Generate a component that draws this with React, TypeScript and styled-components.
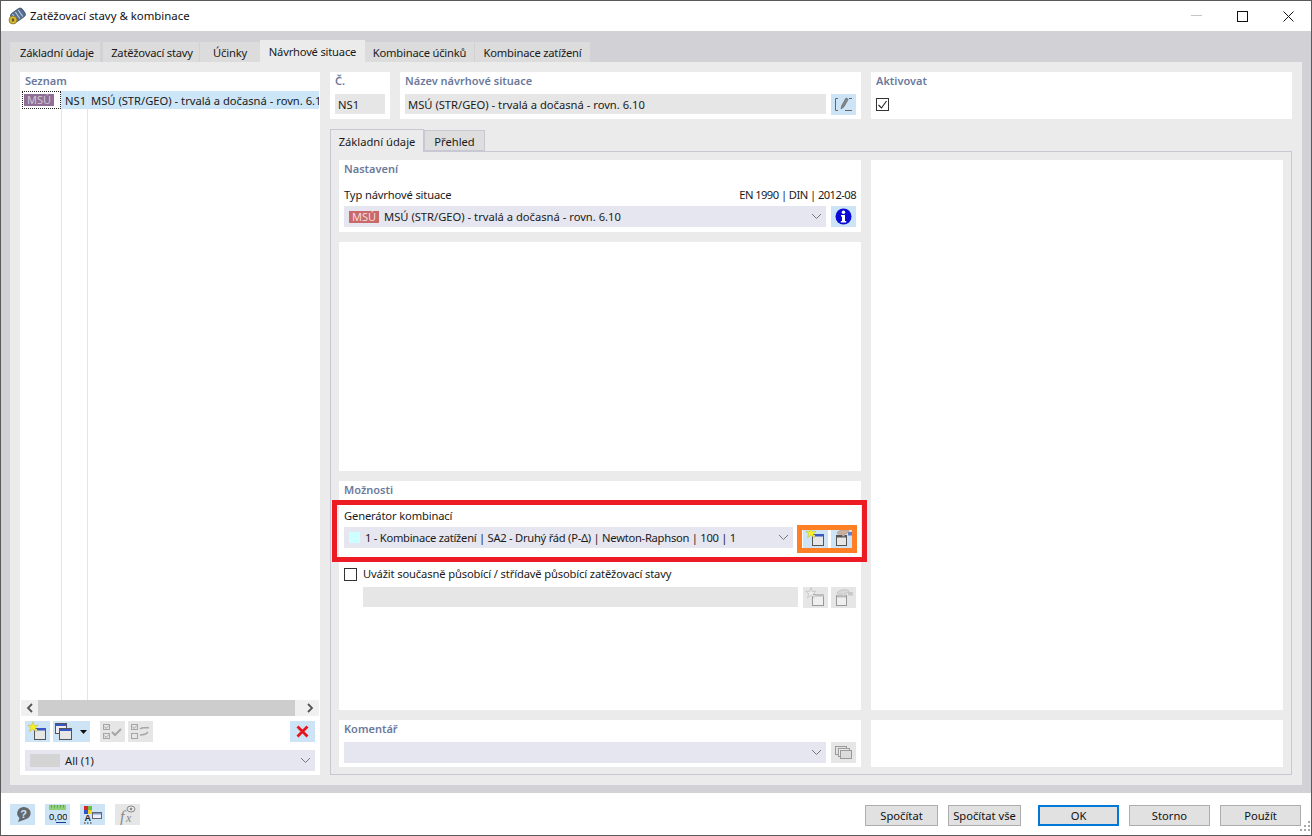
import React from "react";
import styled, { createGlobalStyle } from "styled-components";

const Global = createGlobalStyle`
  html, body { margin: 0; padding: 0; background: #fff; }
  body { font-family: "Noto Sans", "Open Sans", "Liberation Sans", sans-serif; font-size: 11.2px; color: #1a1a1a; }
  * { box-sizing: border-box; }
`;

const Window = styled.div`
  width: 1312px; height: 836px; display: flex; flex-direction: column; background: #fff;
  border: 1px solid #5a5a5a; overflow: hidden;
`;
const TitleBar = styled.div`
  height: 30px; flex: none; display: flex; align-items: center; padding-left: 7px; background: #fff;
`;
const Title = styled.span` margin-left: 4px; padding-bottom: 2px; font-size: 11.4px; flex: 1; color: #111; `;
const WinBtn = styled.div`
  width: 46px; height: 30px; display: flex; align-items: center; justify-content: center;
`;
const Band = styled.div`
  flex: 1; min-height: 0; background: #d1d1d6; padding: 9px 9px 8px 9px; display: flex; flex-direction: column;
`;
const Tabs = styled.div` height: 22px; display: flex; align-items: flex-end; flex: none; `;
const Tab = styled.div<{ $w: number; $active?: boolean; $gap?: number; $shift?: number }>`
  width: ${p => p.$w}px; margin-right: ${p => p.$gap ?? 0}px; padding-left: ${p => p.$shift ?? 0}px;
  height: ${p => (p.$active ? 22 : 20)}px; display: flex; align-items: center; justify-content: center;
  background: ${p => (p.$active ? "#ebebeb" : "#dcdcdc")}; white-space: nowrap; color: #1a1a1a; letter-spacing: -0.2px;
`;
const Content = styled.div`
  flex: 1; min-height: 0; background: #ebebeb; padding: 10px; display: grid; grid-template-columns: 300px 962px; column-gap: 10px;
`;
const Panel = styled.div`
  background: #fff; padding: 0 5px; display: flex; flex-direction: column; min-width: 0; position: relative;
`;
const Heading = styled.div`
  height: 18px; line-height: 18px; flex: none; font-weight: 600; color: #6b7a9c; font-size: 11px;
`;
const ListPanel = styled(Panel)` padding: 0; `;
const ListHeading = styled(Heading)` padding-left: 5px; height: 19px; `;
const Tree = styled.div` flex: 1; min-height: 0; display: flex; padding-left: 1px; padding-right: 1px; overflow: hidden; `;
const TreeCol = styled.div<{ $w?: number }>`
  ${p => (p.$w ? `width:${p.$w}px; flex:none; border-right: 1px solid #e4e4e4;` : "flex:1; min-width:0;")}
`;
const TreeCell = styled.div<{ $selected?: boolean }>`
  height: 18px; display: flex; align-items: center; padding-left: 3px; white-space: nowrap; overflow: hidden;
  background: ${p => (p.$selected ? "#cde6f7" : "transparent")};
`;
const FocusCell = styled(TreeCell)`
  outline: 1px dotted #222; outline-offset: -1px; padding-left: 2px; margin-left: 1px;
`;
const Badge = styled.span<{ $bg: string; $fg: string }>`
  display: inline-flex; align-items: center; justify-content: center; width: 30px; height: 12px; flex: none;
  background: ${p => p.$bg}; color: ${p => p.$fg}; font-size: 11px; line-height: 12px;
`;
const ScrollBar = styled.div`
  height: 16px; flex: none; margin: 0 1px; background: #f0f0f0; display: flex; align-items: stretch;
`;
const ScrollArrow = styled.div` width: 17px; flex: none; display: flex; align-items: center; justify-content: center; `;
const ScrollThumb = styled.div` width: 257px; background: #cdcdcd; `;
const ScrollRest = styled.div` flex: 1; `;
const ListBar = styled.div`
  height: 21px; flex: none; margin: 5px 5px 0; display: flex; gap: 3px;
`;
const IconBtn = styled.div<{ $w?: number; $off?: boolean }>`
  width: ${p => p.$w ?? 25}px; height: 21px; flex: none; display: flex; align-items: center; justify-content: center;
  background: ${p => (p.$off ? "#e6e6e6" : "#cde4f7")};
`;
const Spacer = styled.div<{ $w?: number }>` ${p => (p.$w ? `width:${p.$w}px;flex:none;` : "flex:1;")} `;
const Combo = styled.div<{ $w?: number }>`
  height: 21px; display: flex; align-items: center; background: #e6e6f0; padding-left: 5px; gap: 5px; white-space: nowrap;
  ${p => (p.$w ? `width:${p.$w}px;flex:none;` : "flex:1;min-width:0;")}
`;
const ComboText = styled.span<{ $tight?: boolean }>` flex: 1; min-width: 0; ${p => (p.$tight ? "letter-spacing:-0.27px;" : "")} `;
const ChevronBox = styled.span` width: 20px; flex: none; display: flex; justify-content: center; `;
const Swatch = styled.span<{ $w: number; $h: number; $c: string }>`
  width: ${p => p.$w}px; height: ${p => p.$h}px; flex: none; background: ${p => p.$c};
`;
const ListCombo = styled(Combo)` margin: 8px 5px 4px; flex: none; `;
const Right = styled.div` display: flex; flex-direction: column; min-height: 0; `;
const TopRow = styled.div` display: grid; grid-template-columns: 60px 461px 421px; column-gap: 10px; height: 47px; flex: none; `;
const Field = styled.div<{ $off?: boolean }>`
  height: 20px; background: #e6e6e6; padding-left: ${p => (p.$off ? 0 : 3)}px; display: flex; align-items: center; flex: 1; min-width: 0; white-space: nowrap;
`;
const FieldRow = styled.div` display: flex; gap: 5px; margin-top: 4px; `;
const SubTabs = styled.div` height: 22px; margin-top: 10px; display: flex; flex: none; align-items: flex-end; position: relative; z-index: 1; `;
const SubTab = styled.div<{ $w: number; $active?: boolean }>`
  width: ${p => p.$w}px; height: ${p => (p.$active ? 23 : 21)}px; display: flex; align-items: center; justify-content: center; padding-top: 1px;
  background: ${p => (p.$active ? "#ebebeb" : "#dedede")}; border: 1px solid #c8c8d4;
  border-bottom: ${p => (p.$active ? "none" : "1px solid #c8c8d4")}; margin-bottom: ${p => (p.$active ? -1 : 0)}px;
`;
const Frame = styled.div`
  flex: 1; min-height: 0; border: 1px solid #c8c8d4; padding: 8px; display: grid;
  grid-template-columns: 522px 412px; grid-template-rows: 550px 47px; gap: 10px;
`;
const Stack = styled.div` display: grid; grid-template-rows: 72px 229px 229px; row-gap: 10px; min-height: 0; `;
const LabelRow = styled.div`
  height: 18px; margin-top: 8px; margin-bottom: 2px; padding-bottom: 2px; display: flex; align-items: center; justify-content: space-between; flex: none; white-space: nowrap; letter-spacing: -0.15px;
`;
const Norm = styled.span` letter-spacing: -0.56px; `;
const WideRow = styled.div<{ $top?: number }>` display: flex; flex: none; height: 21px; margin-top: ${p => p.$top ?? 0}px; `;
const Checkbox = styled.div`
  width: 13px; height: 13px; flex: none; border: 1px solid #333; background: #fff; display: flex; align-items: center; justify-content: center;
`;
const CheckRow = styled.div` height: 18px; margin-top: 17px; display: flex; align-items: center; gap: 6px; flex: none; white-space: nowrap; letter-spacing: -0.14px; `;
const CheckText = styled.span` padding-bottom: 2px; `;
const DisabledRow = styled.div` height: 21px; margin-top: 4px; margin-left: 19px; display: flex; flex: none; `;
const GenArea = styled.div` position: relative; flex: none; `;
const RedFrame = styled.div`
  position: absolute; left: -12px; right: -11px; top: 1px; bottom: -14px; border: 5px solid #ed1c24; pointer-events: none;
`;
const BtnGroup = styled.div` position: relative; display: flex; gap: 3px; flex: none; `;
const OrangeFrame = styled.div`
  position: absolute; left: -6px; right: -1px; top: -2px; bottom: -5px; border: 5px solid #ff7f27; pointer-events: none;
`;
const CheckBoxAlign = styled.div` padding-top: 8px; `;
const Footer = styled.div`
  height: 42px; flex: none; display: flex; align-items: center; padding: 0 10px 0 9px; position: relative;
`;
const FooterIcons = styled.div` display: flex; gap: 10px; `;
const DlgBtn = styled.div<{ $w: number; $default?: boolean; $gap: number }>`
  width: ${p => p.$w}px; height: 21px; margin-left: ${p => p.$gap}px; margin-top: 2px; background: #e1e1e1; display: flex; align-items: center; justify-content: center;
  border: ${p => (p.$default ? "2px solid #0078d7" : "1px solid #adadad")}; color: #111;
`;
const Grip = styled.div` position: absolute; right: 1px; bottom: 1px; `;
const CopyBtn = styled(IconBtn)` justify-content: flex-start; padding-left: 2px; `;

const Chevron = () => (
  <svg width="11" height="7" viewBox="0 0 11 7"><path d="M1 1l4.500 4.500L10 1" fill="none" stroke="#777" strokeWidth="1" /></svg>
);
const NewIcon = ({ off }: { off?: boolean }) => (
  <svg width="25" height="21" viewBox="0 0 25 21">
    <rect x="9.500" y="7.500" width="11" height="11" fill={off ? "#efefef" : "#e6e6e6"} stroke={off ? "#999" : "#555"} />
    <rect x="12" y="7" width="9" height="2.500" fill={off ? "#bdbdbd" : "#3a55c4"} />
    <path d="M8 .5l1.200 3.900 4-.2-2.900 2.500 1.200 4L8 8.300l-3.500 2.400 1.200-4-2.900-2.500 4 .2z" fill={off ? "#ededed" : "#f8f020"} stroke={off ? "#aaa" : "#bdb64a"} strokeWidth=".5" />
  </svg>
);
const HandIcon = ({ off }: { off?: boolean }) => (
  <svg width="25" height="21" viewBox="0 0 25 21">
    <rect x="5.500" y="8.500" width="10" height="10" fill={off ? "#efefef" : "#e6e6e6"} stroke={off ? "#999" : "#555"} />
    <rect x="6" y="8" width="9" height="2.500" fill={off ? "#bdbdbd" : "#555"} />
    <path d="M17 5h5v3.500h-5z" fill={off ? "#c9c9c9" : "#5b82c8"} />
    <path d="M6 6c1-2 3-2.500 5-3s4-.5 6 .2c1.200.5 1 2-.2 2.500l-2.800 1.200-.8 2.600-2-.5-.5-2-3.500.3z" fill={off ? "#d8d8d8" : "#cdb19e"} stroke={off ? "#aaa" : "#9a8272"} strokeWidth=".5" />
  </svg>
);
const CopyIcon = () => (
  <svg width="17" height="17" viewBox="0 0 17 17">
    <rect x=".5" y=".5" width="11" height="10" fill="#eee" stroke="#555" />
    <rect x="1" y="1" width="10" height="2" fill="#3a55c4" />
    <rect x="4.500" y="5.500" width="12" height="11" fill="#e6e6e6" stroke="#555" />
    <rect x="5" y="6" width="11" height="2" fill="#3a55c4" />
  </svg>
);
const CheckAllIcon = () => (
  <svg width="21" height="17" viewBox="0 0 21 17" fill="none" stroke="#a6a6a6">
    <rect x="1.500" y="1.500" width="6" height="5" /><rect x="1.500" y="10.500" width="6" height="5" />
    <path d="M2.500 3.500l1.500 2 3-3M2.500 12.500l1.500 2 3-3" /><path d="M10 9l3 3 6-6" strokeWidth="2" />
  </svg>
);
const SwapIcon = () => (
  <svg width="21" height="17" viewBox="0 0 21 17" fill="none" stroke="#a6a6a6">
    <rect x="1.500" y="1.500" width="6" height="5" /><rect x="1.500" y="10.500" width="6" height="5" />
    <path d="M2.500 3.500l1.500 2 3-3" /><path d="M10 6c3-2.500 5-.5 9-1.500M10 12c3 0 6-.5 8-3" strokeWidth="1.500" />
  </svg>
);
const XIcon = () => (
  <svg width="13" height="13" viewBox="0 0 13 13"><path d="M1.500 1.500l10 10M11.500 1.500l-10 10" stroke="#e8141c" strokeWidth="2.800" /></svg>
);
const EditIcon = () => (
  <svg width="19" height="15" viewBox="0 0 19 15" fill="none">
    <path d="M4 1.500H1.500v12H4M11 13.500h7M15 1.500h3" stroke="#666" />
    <path d="M7 12l.8-3.500 4.200-7.500 2.200 1.200-4.200 7.500z" fill="#888" stroke="#555" strokeWidth=".6" />
  </svg>
);
const InfoIcon = () => (
  <svg width="17" height="17" viewBox="0 0 17 17">
    <circle cx="8.500" cy="8.500" r="8" fill="#0a0ad8" />
    <circle cx="8.500" cy="4.200" r="1.700" fill="#fff" />
    <path d="M6 7h4v6h1.200v1.400H5.800V13H7V8.400H6z" fill="#fff" />
  </svg>
);
const CommentIcon = () => (
  <svg width="19" height="15" viewBox="0 0 19 15" fill="none" stroke="#9a9a9a">
    <rect x="1.500" y="1.500" width="11" height="8" fill="#e2e2e2" /><rect x="4.500" y="3.500" width="11" height="8" fill="#ececec" /><rect x="6.500" y="5.500" width="11" height="8" fill="#dcdcdc" />
  </svg>
);
const HelpIcon = () => (
  <svg width="19" height="19" viewBox="0 0 19 19">
    <path d="M10.500 2a6.800 6.300 0 0 1 1.500 12.500L5 17l1.500-4A6.800 6.300 0 0 1 10.500 2z" fill="#62686c" />
    <text x="10.500" y="12.500" textAnchor="middle" fontSize="11" fontWeight="700" fill="#cde4f7" fontFamily="Liberation Sans, sans-serif">?</text>
  </svg>
);
const UnitsIcon = () => (
  <svg width="19" height="19" viewBox="0 0 19 19">
    <rect x="1" y="0" width="17" height="5" fill="#8fcf78" />
    <path d="M3.500 0v2.500M6.500 0v2.500M9.500 0v2.500M12.500 0v2.500M15.500 0v2.500" stroke="#5f9f4d" />
    <text x="1" y="15" fontSize="9.500" fill="#111" fontFamily="Liberation Sans, sans-serif">0,00</text>
    <path d="M8 17.500h10" stroke="#1a3a9a" />
  </svg>
);
const ColorsIcon = () => (
  <svg width="25" height="21" viewBox="0 0 25 21">
    <rect x="4" y="2" width="4" height="4" fill="#d8262c" /><rect x="8" y="2" width="4" height="4" fill="#6fbf3a" />
    <rect x="4" y="6" width="4" height="4" fill="#2f55c8" /><rect x="8" y="6" width="4" height="4" fill="#f2d32a" />
    <text x="4.500" y="17" fontSize="9" fontWeight="700" fill="#222" fontFamily="Liberation Sans, sans-serif">A</text>
    <path d="M4 19h1.500M7 19h1.500M10 19h1.500" stroke="#222" />
    <rect x="12.500" y="8.500" width="9" height="6" fill="#eef" stroke="#666" /><rect x="13" y="9" width="8" height="1.500" fill="#7f9fd0" />
  </svg>
);
const FxIcon = () => (
  <svg width="25" height="21" viewBox="0 0 25 21">
    <text x="5" y="18" fontSize="16" fontStyle="italic" fill="#8c8c8c" fontFamily="Liberation Serif, serif">f</text>
    <text x="11" y="18" fontSize="12" fontStyle="italic" fill="#8c8c8c" fontFamily="Liberation Serif, serif">x</text>
    <ellipse cx="16" cy="5" rx="4" ry="3" fill="none" stroke="#8c8c8c" /><circle cx="16" cy="5" r="1.300" fill="#8c8c8c" />
  </svg>
);
const AppIcon = () => (
  <svg width="18" height="18" viewBox="0 0 18 18">
    <g transform="rotate(-35 10 8)">
      <rect x="3" y="3" width="14" height="10" rx="3" fill="#566f92" stroke="#2f3f55" strokeWidth=".6" />
      <path d="M6 4v8M9.500 4v8M13 4v8" stroke="#c9d5e2" strokeWidth="1" />
    </g>
    <circle cx="5" cy="13" r="4" fill="#d6b93a" stroke="#6b5b18" strokeWidth=".6" />
    <rect x="3.800" y="11.500" width="2.400" height="3" fill="#6b5b18" />
  </svg>
);

export default function App() {
  return (
    <Window>
      <Global />
      <TitleBar>
        <AppIcon />
        <Title>Zatěžovací stavy &amp; kombinace</Title>
        <WinBtn><svg width="11" height="2"><rect width="11" height="1" fill="#c4c4c4" /></svg></WinBtn>
        <WinBtn><svg width="11" height="11"><rect x=".5" y=".5" width="10" height="10" fill="none" stroke="#111" /></svg></WinBtn>
        <WinBtn><svg width="11" height="11"><path d="M.5.500l10 10M10.500.500l-10 10" stroke="#111" /></svg></WinBtn>
      </TitleBar>
      <Band>
        <Tabs>
          <Tab $w={90} $gap={3} $shift={4}>Základní údaje</Tab>
          <Tab $w={96} $gap={1} $shift={2}>Zatěžovací stavy</Tab>
          <Tab $w={60}>Účinky</Tab>
          <Tab $w={105} $active>Návrhové situace</Tab>
          <Tab $w={109} $gap={1}>Kombinace účinků</Tab>
          <Tab $w={115}>Kombinace zatížení</Tab>
        </Tabs>
        <Content>
          <ListPanel>
            <ListHeading>Seznam</ListHeading>
            <Tree>
              <TreeCol $w={41}>
                <FocusCell><Badge $bg="#8f6f96" $fg="#cfc6d6">MSÚ</Badge></FocusCell>
              </TreeCol>
              <TreeCol $w={26}><TreeCell $selected>NS1</TreeCell></TreeCol>
              <TreeCol><TreeCell $selected>MSÚ (STR/GEO) - trvalá a dočasná - rovn. 6.10</TreeCell></TreeCol>
            </Tree>
            <ScrollBar>
              <ScrollArrow><svg width="7" height="10"><path d="M6 1L2 5l4 4" fill="none" stroke="#555" strokeWidth="1.800" /></svg></ScrollArrow>
              <ScrollThumb />
              <ScrollRest />
              <ScrollArrow><svg width="7" height="10"><path d="M1 1l4 4-4 4" fill="none" stroke="#555" strokeWidth="1.800" /></svg></ScrollArrow>
            </ScrollBar>
            <ListBar>
              <IconBtn><NewIcon /></IconBtn>
              <CopyBtn $w={37}>
                <CopyIcon />
                <Spacer $w={8} />
                <svg width="7" height="4"><path d="M0 0h7L3.500 4z" fill="#111" /></svg>
              </CopyBtn>
              <Spacer $w={4} />
              <IconBtn $off><CheckAllIcon /></IconBtn>
              <IconBtn $off><SwapIcon /></IconBtn>
              <Spacer />
              <IconBtn><XIcon /></IconBtn>
            </ListBar>
            <ListCombo>
              <Swatch $w={30} $h={13} $c="#d4d4d4" />
              <ComboText>All (1)</ComboText>
              <ChevronBox><Chevron /></ChevronBox>
            </ListCombo>
          </ListPanel>
          <Right>
            <TopRow>
              <Panel>
                <Heading>Č.</Heading>
                <FieldRow><Field>NS1</Field></FieldRow>
              </Panel>
              <Panel>
                <Heading>Název návrhové situace</Heading>
                <FieldRow>
                  <Field>MSÚ (STR/GEO) - trvalá a dočasná - rovn. 6.10</Field>
                  <IconBtn $w={25}><EditIcon /></IconBtn>
                </FieldRow>
              </Panel>
              <Panel>
                <Heading>Aktivovat</Heading>
                <CheckBoxAlign>
                  <Checkbox><svg width="11" height="10"><path d="M1.500 5l3 3 5-7" fill="none" stroke="#222" strokeWidth="1.100" /></svg></Checkbox>
                </CheckBoxAlign>
              </Panel>
            </TopRow>
            <SubTabs>
              <SubTab $w={94} $active>Základní údaje</SubTab>
              <SubTab $w={61}>Přehled</SubTab>
            </SubTabs>
            <Frame>
              <Stack>
                <Panel>
                  <Heading>Nastavení</Heading>
                  <LabelRow><span>Typ návrhové situace</span><Norm>EN 1990 | DIN | 2012-08</Norm></LabelRow>
                  <WideRow>
                    <Combo>
                      <Badge $bg="#c9696a" $fg="#f6dcdc">MSÚ</Badge>
                      <ComboText>MSÚ (STR/GEO) - trvalá a dočasná - rovn. 6.10</ComboText>
                      <ChevronBox><Chevron /></ChevronBox>
                    </Combo>
                    <Spacer $w={5} />
                    <IconBtn><InfoIcon /></IconBtn>
                  </WideRow>
                </Panel>
                <Panel />
                <Panel>
                  <Heading>Možnosti</Heading>
                  <GenArea>
                    <LabelRow>Generátor kombinací</LabelRow>
                    <WideRow>
                      <Combo $w={449}>
                        <Swatch $w={11} $h={11} $c="#ccffff" />
                        <ComboText $tight>1 - Kombinace zatížení | SA2 - Druhý řád (P-Δ) | Newton-Raphson | 100 | 1</ComboText>
                        <ChevronBox><Chevron /></ChevronBox>
                      </Combo>
                      <Spacer $w={10} />
                      <BtnGroup>
                        <IconBtn><NewIcon /></IconBtn>
                        <IconBtn><HandIcon /></IconBtn>
                        <OrangeFrame />
                      </BtnGroup>
                    </WideRow>
                    <RedFrame />
                  </GenArea>
                  <CheckRow><Checkbox /><CheckText>Uvážit současně působící / střídavě působící zatěžovací stavy</CheckText></CheckRow>
                  <DisabledRow>
                    <Field $off />
                    <Spacer $w={5} />
                    <BtnGroup>
                      <IconBtn $off><NewIcon off /></IconBtn>
                      <IconBtn $off><HandIcon off /></IconBtn>
                    </BtnGroup>
                  </DisabledRow>
                </Panel>
              </Stack>
              <Panel />
              <Panel>
                <Heading>Komentář</Heading>
                <WideRow $top={4}>
                  <Combo><ComboText /><ChevronBox><Chevron /></ChevronBox></Combo>
                  <Spacer $w={5} />
                  <IconBtn $off><CommentIcon /></IconBtn>
                </WideRow>
              </Panel>
              <Panel />
            </Frame>
          </Right>
        </Content>
      </Band>
      <Footer>
        <FooterIcons>
          <IconBtn><HelpIcon /></IconBtn>
          <IconBtn><UnitsIcon /></IconBtn>
          <IconBtn><ColorsIcon /></IconBtn>
          <IconBtn $off><FxIcon /></IconBtn>
        </FooterIcons>
        <Spacer />
        <DlgBtn $w={73} $gap={0}>Spočítat</DlgBtn>
        <DlgBtn $w={73} $gap={10}>Spočítat vše</DlgBtn>
        <DlgBtn $w={81} $gap={17} $default>OK</DlgBtn>
        <DlgBtn $w={81} $gap={10}>Storno</DlgBtn>
        <DlgBtn $w={81} $gap={10}>Použít</DlgBtn>
        <Grip><svg width="10" height="10" fill="#a8a8a8"><rect x="8" y="0" width="2" height="2" /><rect x="4" y="4" width="2" height="2" /><rect x="8" y="4" width="2" height="2" /><rect x="0" y="8" width="2" height="2" /><rect x="4" y="8" width="2" height="2" /><rect x="8" y="8" width="2" height="2" /></svg></Grip>
      </Footer>
    </Window>
  );
}
